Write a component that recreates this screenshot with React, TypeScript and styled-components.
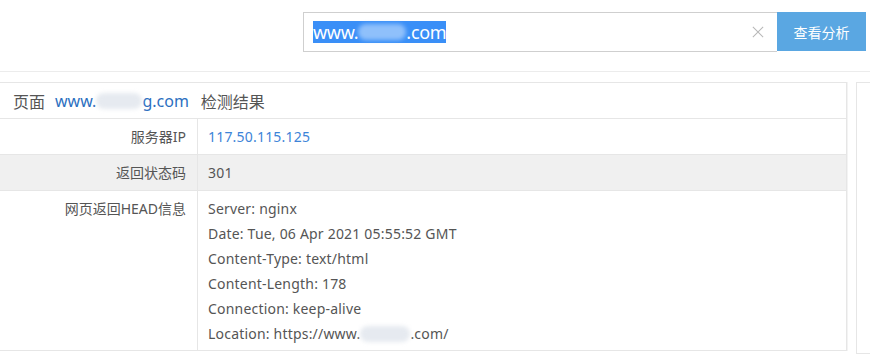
import styled, { createGlobalStyle } from 'styled-components';

const GlobalStyle = createGlobalStyle`
	html, body {
		margin: 0;
		padding: 0;
		background: #fff;
		overflow: hidden;
	}
	body {
		font-family: "Noto Sans", "Noto Sans CJK SC", sans-serif;
		color: #555;
	}
`;

const headers = [
	'Server: nginx',
	'Date: Tue, 06 Apr 2021 05:55:52 GMT',
	'Content-Type: text/html',
	'Content-Length: 178',
	'Connection: keep-alive',
];

export default function App() {
	return (
		<>
			<GlobalStyle />
			<TopBar>
				<SearchBox>
					<SearchInput>
						<Selected>
							www.<Smudge $tone='select' $w={48} />.com
						</Selected>
						<ClearIcon viewBox='0 0 14 14'>
							<path d='M1 1L13 13M13 1L1 13' />
						</ClearIcon>
					</SearchInput>
					<SearchButton>查看分析</SearchButton>
				</SearchBox>
			</TopBar>
			<Body>
				<Panel>
					<PanelHeader>
						页面<Domain>
							www.<Smudge $tone='light' $w={46} />g.com
						</Domain>检测结果
					</PanelHeader>
					<Row>
						<Label>服务器IP</Label>
						<Value $link>117.50.115.125</Value>
					</Row>
					<Row $shaded>
						<Label>返回状态码</Label>
						<Value>301</Value>
					</Row>
					<Row $tall>
						<Label>网页返回HEAD信息</Label>
						<Value>
							{headers.map((h) => (
								<Line key={h}>{h}</Line>
							))}
							<Line>
								Location: https://www.<Smudge $tone='light' $w={50} />.com/
							</Line>
						</Value>
					</Row>
				</Panel>
				<SidePanel />
			</Body>
		</>
	);
}

const TopBar = styled.header`
	height: 72px;
	border-bottom: 1px solid #ececec;
	display: flex;
	justify-content: flex-end;
	align-items: flex-start;
	padding: 12px 4px 0 0;
	box-sizing: border-box;
`;

const SearchBox = styled.div`
	display: flex;
	height: 40px;
`;

const SearchInput = styled.div`
	width: 474px;
	height: 40px;
	box-sizing: border-box;
	border: 1px solid #cfcfcf;
	border-right: none;
	display: flex;
	align-items: center;
	justify-content: space-between;
	padding: 0 13px 0 9px;
`;

const Selected = styled.span`
	background: #3a8ff7;
	color: #fff;
	font-size: 18px;
	line-height: 22px;
	height: 22px;
	display: inline-flex;
	align-items: center;
	letter-spacing: -0.3px;
`;

const Smudge = styled.span<{ $tone: 'select' | 'light'; $w: number }>`
	display: inline-block;
	width: ${(p) => p.$w}px;
	height: 16px;
	border-radius: 8px;
	vertical-align: middle;
	background: ${(p) => (p.$tone === 'select' ? '#8fc0fb' : '#e6eaf0')};
	filter: blur(2px);
`;

const ClearIcon = styled.svg`
	width: 12px;
	height: 12px;
	fill: none;
	stroke: #b8b8b8;
	stroke-width: 1.2;
`;

const SearchButton = styled.button`
	width: 89px;
	height: 39px;
	border: none;
	background: #5aa7e2;
	color: #fff;
	font-family: "Noto Sans CJK SC", sans-serif;
	font-size: 14px;
	padding: 0;
	cursor: pointer;
`;

const Body = styled.main`
	display: flex;
	align-items: flex-start;
	gap: 9px;
	padding-top: 10px;
	margin-left: -1px;
`;

const Panel = styled.section`
	width: 848px;
	flex-shrink: 0;
	border: 1px solid #e6e6e6;
	box-shadow: 1px 0 0 #f3f3f3;
	box-sizing: border-box;
`;

const PanelHeader = styled.h2`
	margin: 0;
	height: 35px;
	display: flex;
	align-items: center;
	padding-left: 13px;
	font-size: 16px;
	font-weight: normal;
	color: #555;
	border-bottom: 1px solid #e6e6e6;
`;

const Domain = styled.span`
	color: #2c6fbf;
	margin: 0 12px 0 10px;
	display: inline-flex;
	align-items: center;
`;

const Row = styled.div<{ $shaded?: boolean; $tall?: boolean }>`
	display: grid;
	grid-template-columns: 198px 1fr;
	background: ${(p) => (p.$shaded ? '#f0f0f0' : '#fff')};
	border-bottom: 1px solid #e6e6e6;
	min-height: 35px;
	&:last-child {
		border-bottom: none;
	}
`;

const Label = styled.div`
	border-right: 1px solid #e6e6e6;
	text-align: right;
	padding: 5px 11px 0 0;
	font-size: 14px;
	line-height: 25px;
	color: #555;
`;

const Value = styled.div<{ $link?: boolean }>`
	padding: 5px 10px 4px;
	font-size: 14px;
	line-height: 25px;
	letter-spacing: 0.2px;
	color: ${(p) => (p.$link ? '#3d84d8' : '#555')};
`;

const Line = styled.div`
	display: flex;
	align-items: center;
	height: 25px;
`;

const SidePanel = styled.aside`
	flex: 1;
	height: 270px;
	border: 1px solid #e6e6e6;
	border-right: none;
`;
